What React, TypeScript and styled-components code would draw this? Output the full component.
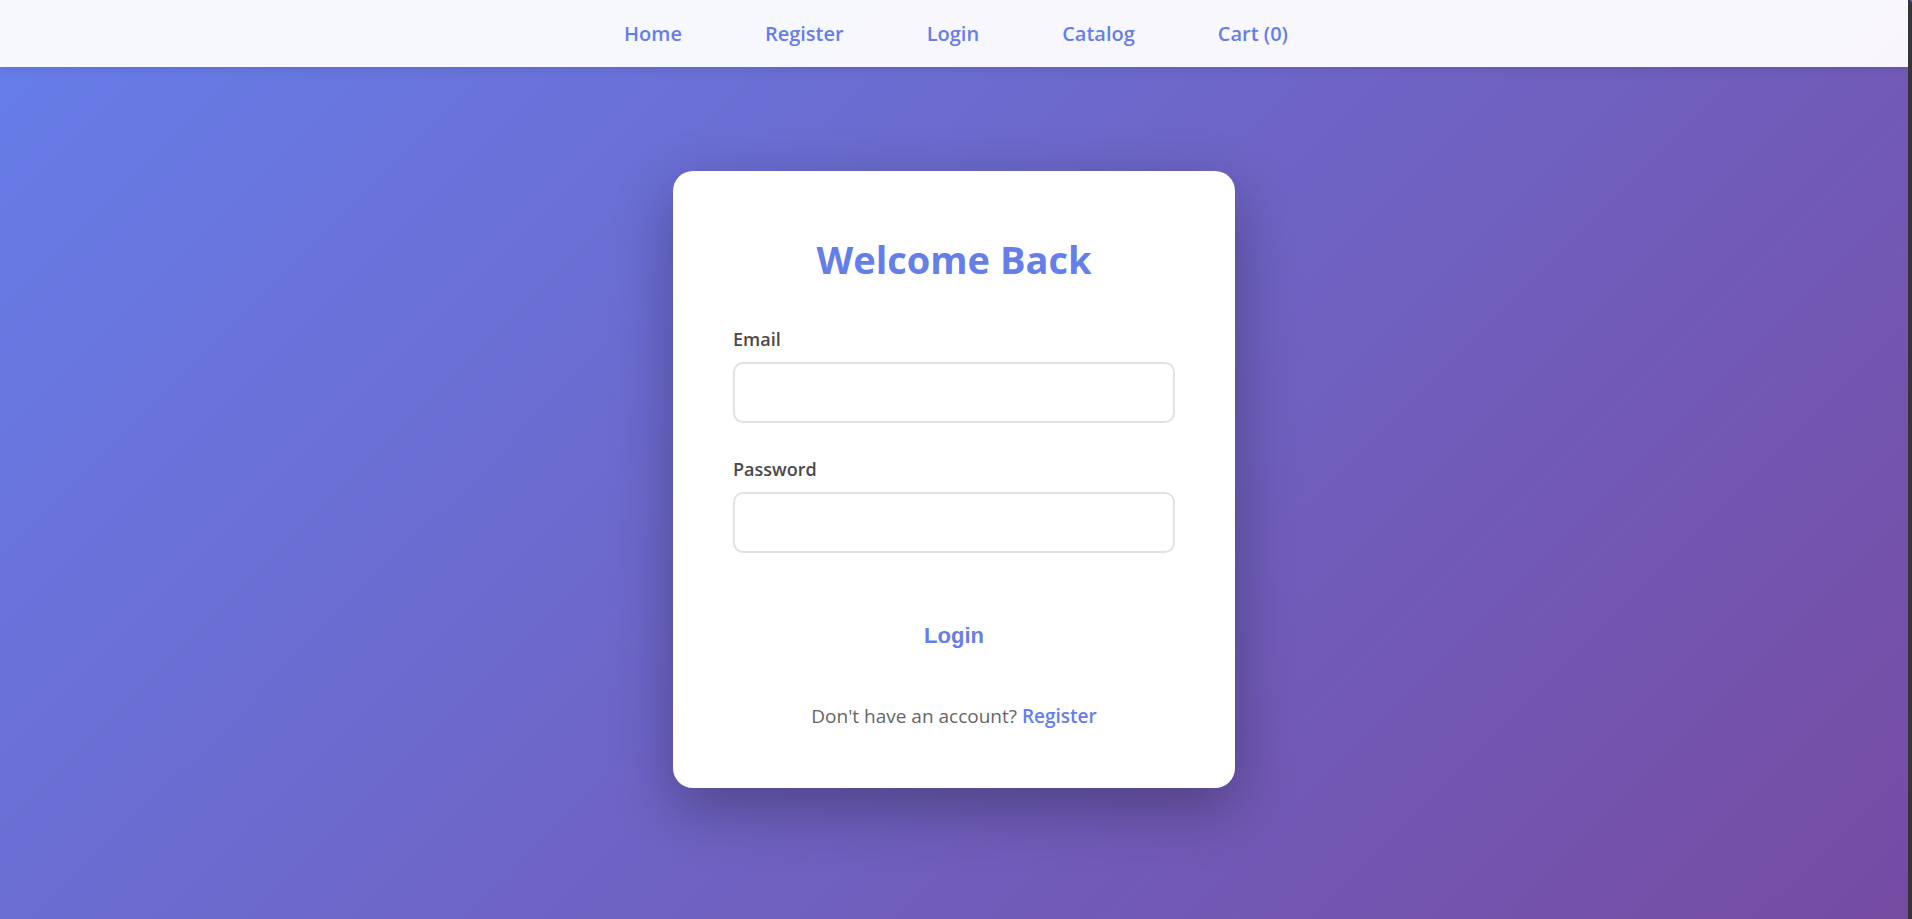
import styled, { createGlobalStyle } from 'styled-components';

const GlobalStyle = createGlobalStyle`
    * {
        box-sizing: border-box;
    }
    html,
    body {
        margin: 0;
        padding: 0;
    }
    body {
        font-family: 'Open Sans', 'Noto Sans', 'Liberation Sans', sans-serif;
        background: linear-gradient(135deg, #667eea 0%, #764ba2 100%);
        min-height: 100vh;
        overflow: hidden;
    }
`;

const Frame = styled.div`
    display: flex;
    height: 100vh;
`;
const Page = styled.div`
    flex: 1;
    display: flex;
    flex-direction: column;
`;
const Edge = styled.div`
    width: 4px;
    background-color: #353535;
    border-top-right-radius: 6px;
`;
const Nav = styled.nav`
    height: 67px;
    display: flex;
    justify-content: center;
    align-items: center;
    gap: 83px;
    background-color: rgba(255, 255, 255, 0.95);
    box-shadow: 0 2px 10px rgba(0, 0, 0, 0.1);
    padding-left: 4px;
`;
const NavLink = styled.a`
    color: #667eea;
    font-size: 20px;
    font-weight: 600;
    text-decoration: none;
    cursor: pointer;
`;
const Content = styled.main`
    flex: 1;
    display: flex;
    justify-content: center;
    align-items: flex-start;
    padding-top: 104px;
`;
const Card = styled.div`
    width: 562px;
    background-color: #fff;
    border-radius: 20px;
    padding: 60px;
    box-shadow: 0 20px 60px rgba(0, 0, 0, 0.3);
    display: flex;
    flex-direction: column;
`;
const Title = styled.h1`
    margin: 0 0 40px;
    text-align: center;
    color: #667eea;
    font-size: 38px;
    font-weight: 700;
    line-height: 56px;
`;
const Field = styled.div`
    display: flex;
    flex-direction: column;
    gap: 11px;
    margin-bottom: 34px;
`;
const Label = styled.label`
    color: #4a4a4a;
    font-size: 18px;
    font-weight: 600;
    line-height: 24px;
`;
const Input = styled.input`
    height: 61px;
    width: 100%;
    border: 2px solid #e1e1e1;
    border-radius: 10px;
    padding: 0 18px;
    font-size: 19px;
    font-family: inherit;
    outline: none;
`;
const Submit = styled.button`
    margin-top: 19px;
    height: 60px;
    border: none;
    background: none;
    color: #667eea;
    font-family: 'Liberation Sans', Arial, sans-serif;
    font-size: 22px;
    font-weight: 700;
    cursor: pointer;
`;
const Footer = styled.p`
    margin: 38px 0 0;
    text-align: center;
    color: #666;
    font-size: 19px;
    line-height: 24px;
    & > a {
        color: #667eea;
        font-weight: 600;
        text-decoration: none;
    }
`;

const links = ['Home', 'Register', 'Login', 'Catalog', 'Cart (0)'];

const App = () => {
    return (
        <Frame>
            <GlobalStyle />
            <Page>
                <Nav>
                    {links.map((link) => (
                        <NavLink key={link}>{link}</NavLink>
                    ))}
                </Nav>
                <Content>
                    <Card>
                        <Title>Welcome Back</Title>
                        <Field>
                            <Label>Email</Label>
                            <Input type="email" />
                        </Field>
                        <Field>
                            <Label>Password</Label>
                            <Input type="password" />
                        </Field>
                        <Submit>Login</Submit>
                        <Footer>
                            Don't have an account? <a>Register</a>
                        </Footer>
                    </Card>
                </Content>
            </Page>
            <Edge />
        </Frame>
    );
};
export default App;
